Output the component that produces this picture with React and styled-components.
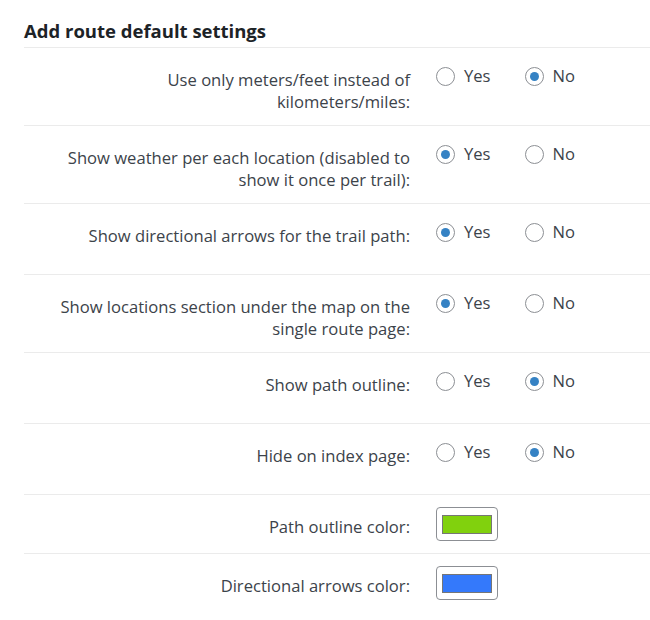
import React from "react";
import styled, { createGlobalStyle } from "styled-components";

const Global = createGlobalStyle`
  html, body { margin: 0; padding: 0; background: #fff; }
  body { font-family: "Open Sans", "Noto Sans", sans-serif; }
`;

const Page = styled.div`
  width: 650px;
  padding: 0 0 0 24px;
  box-sizing: border-box;
`;

const Title = styled.h2`
  margin: 0;
  padding: 21px 0 6px;
  font-size: 18.5px;
  line-height: 20px;
  font-weight: 700;
  color: #1d2327;
  border-bottom: 1px solid #ebebeb;
`;

const Row = styled.div`
  display: grid;
  grid-template-columns: 386px 1fr;
  column-gap: 26px;
  border-bottom: 1px solid #ebebeb;
  &:last-child {
    border-bottom: none;
  }
`;

const Label = styled.div`
  padding: 21px 0 12px;
  text-align: right;
  font-size: 16.6px;
  line-height: 22px;
  color: #3c434a;
`;

const Control = styled.div`
  display: flex;
  align-items: flex-start;
  gap: 34px;
  padding: ${(p) => (p.$swatch ? "12px 0 12px" : "17px 0 31px")};
`;

const Choice = styled.label`
  display: flex;
  align-items: center;
  gap: 9px;
  font-size: 16.6px;
  line-height: 22px;
  color: #3c434a;
`;

const Radio = styled.span`
  width: 19px;
  height: 19px;
  box-sizing: border-box;
  border-radius: 50%;
  border: 1px solid #8c8f94;
  display: flex;
  align-items: center;
  justify-content: center;
  &::after {
    content: "";
    width: 9px;
    height: 9px;
    border-radius: 50%;
    background: ${(p) => (p.$on ? "#3582c4" : "transparent")};
  }
`;

const SwatchBox = styled.div`
  width: 62px;
  height: 34px;
  box-sizing: border-box;
  border: 1px solid #8c8f94;
  border-radius: 4px;
  display: flex;
  align-items: center;
  justify-content: center;
`;

const Swatch = styled.div`
  width: 50px;
  height: 19px;
  box-sizing: border-box;
  border: 1px solid #767676;
  background: ${(p) => p.$color};
`;

const rows = [
  { label: ["Use only meters/feet instead of", "kilometers/miles:"], value: "no" },
  { label: ["Show weather per each location (disabled to", "show it once per trail):"], value: "yes" },
  { label: ["Show directional arrows for the trail path:"], value: "yes" },
  { label: ["Show locations section under the map on the", "single route page:"], value: "yes" },
  { label: ["Show path outline:"], value: "no" },
  { label: ["Hide on index page:"], value: "no" },
];

const colors = [
  { label: "Path outline color:", color: "#81d10d" },
  { label: "Directional arrows color:", color: "#3479fb" },
];

export default function App() {
  return (
    <>
      <Global />
      <Page>
        <Title>Add route default settings</Title>
        {rows.map((r, i) => (
          <Row key={i}>
            <Label>
              {r.label.map((l, j) => (
                <div key={j}>{l}</div>
              ))}
            </Label>
            <Control>
              <Choice>
                <Radio $on={r.value === "yes"} />
                Yes
              </Choice>
              <Choice>
                <Radio $on={r.value === "no"} />
                No
              </Choice>
            </Control>
          </Row>
        ))}
        {colors.map((c, i) => (
          <Row key={"c" + i}>
            <Label>{c.label}</Label>
            <Control $swatch>
              <SwatchBox>
                <Swatch $color={c.color} />
              </SwatchBox>
            </Control>
          </Row>
        ))}
      </Page>
    </>
  );
}
